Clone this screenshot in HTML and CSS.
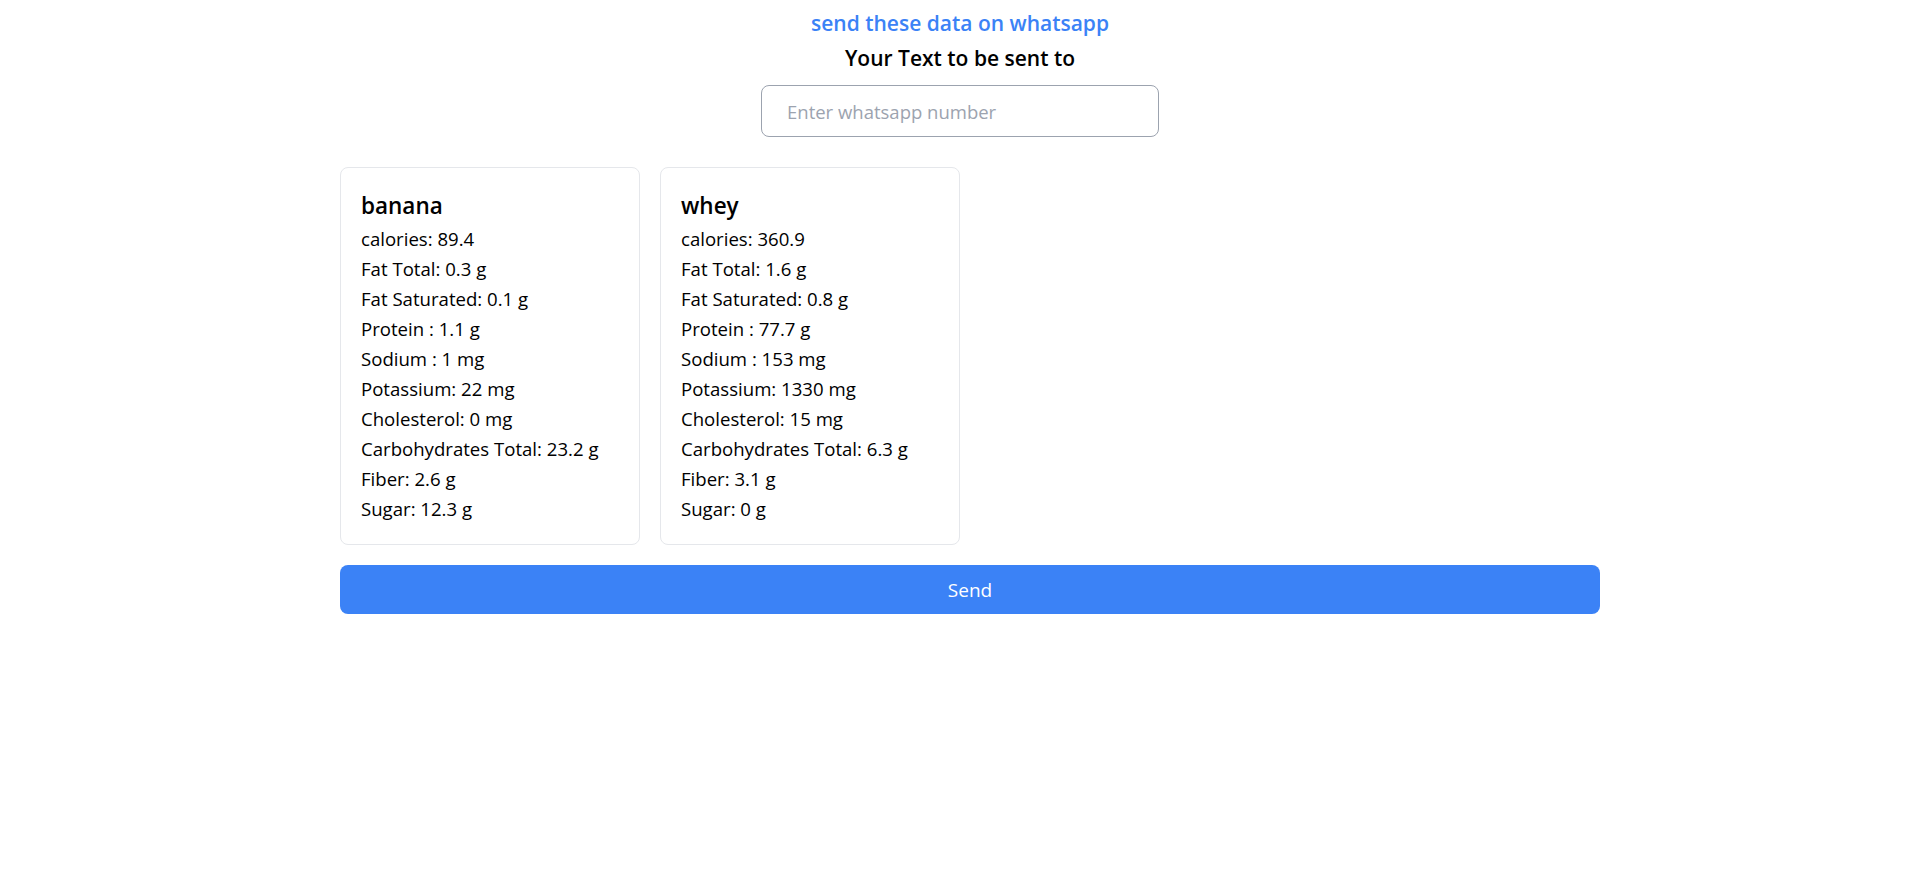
FILE: index.html
```html
<!DOCTYPE html>
<html lang="en">
<head>
<meta charset="utf-8">
<title>send these data on whatsapp</title>
<link rel="stylesheet" href="styles.css">
</head>
<body>
<div class="page">
  <header class="head">
    <h1 class="title">send these data on whatsapp</h1>
    <h2 class="subtitle">Your Text to be sent to</h2>
    <input class="phone" type="text" placeholder="Enter whatsapp number">
  </header>
  <main class="content">
    <div class="cards">
      <div class="card">
        <h3 class="card-title">banana</h3>
        <p class="row">calories: 89.4</p>
        <p class="row">Fat Total: 0.3 g</p>
        <p class="row">Fat Saturated: 0.1 g</p>
        <p class="row">Protein : 1.1 g</p>
        <p class="row">Sodium : 1 mg</p>
        <p class="row">Potassium: 22 mg</p>
        <p class="row">Cholesterol: 0 mg</p>
        <p class="row">Carbohydrates Total: 23.2 g</p>
        <p class="row">Fiber: 2.6 g</p>
        <p class="row">Sugar: 12.3 g</p>
      </div>
      <div class="card">
        <h3 class="card-title">whey</h3>
        <p class="row">calories: 360.9</p>
        <p class="row">Fat Total: 1.6 g</p>
        <p class="row">Fat Saturated: 0.8 g</p>
        <p class="row">Protein : 77.7 g</p>
        <p class="row">Sodium : 153 mg</p>
        <p class="row">Potassium: 1330 mg</p>
        <p class="row">Cholesterol: 15 mg</p>
        <p class="row">Carbohydrates Total: 6.3 g</p>
        <p class="row">Fiber: 3.1 g</p>
        <p class="row">Sugar: 0 g</p>
      </div>
    </div>
    <button class="send" type="button">Send</button>
  </main>
</div>
</body>
</html>
```

FILE: styles.css
```css
* { box-sizing: border-box; }
html, body { margin: 0; padding: 0; background: #fff; }
body {
  font-family: "Open Sans", "Noto Sans", "Liberation Sans", sans-serif;
  color: #000;
}
.page { padding-top: 9px; }
.head {
  display: flex;
  flex-direction: column;
  align-items: center;
}
.title {
  margin: 0;
  font-size: 21px;
  line-height: 28px;
  font-weight: 600;
  color: #3b82f6;
}
.subtitle {
  margin: 7px 0 0;
  font-size: 21px;
  line-height: 28px;
  font-weight: 600;
  color: #000;
}
.phone {
  margin-top: 13px;
  width: 398px;
  height: 52px;
  padding: 0 25px;
  border: 1px solid #9ca3af;
  border-radius: 8px;
  font-family: inherit;
  font-size: 18.5px;
  color: #111;
  outline: none;
}
.phone::placeholder { color: #9ca3af; }
.content {
  width: 1280px;
  margin: 30px auto 0;
  padding-left: 20px;
}
.cards {
  display: flex;
  gap: 20px;
}
.card {
  width: 300px;
  padding: 20px;
  border: 1px solid #e5e7eb;
  border-radius: 8px;
}
.card-title {
  margin: 0;
  font-size: 22.5px;
  line-height: 36px;
  font-weight: 600;
}
.row {
  margin: 0;
  font-size: 18.6px;
  line-height: 30px;
  color: #000;
}
.send {
  display: block;
  width: 100%;
  height: 49px;
  margin-top: 20px;
  border: none;
  border-radius: 8px;
  background: #3b82f6;
  color: #fff;
  font-family: inherit;
  font-size: 19px;
}
```
